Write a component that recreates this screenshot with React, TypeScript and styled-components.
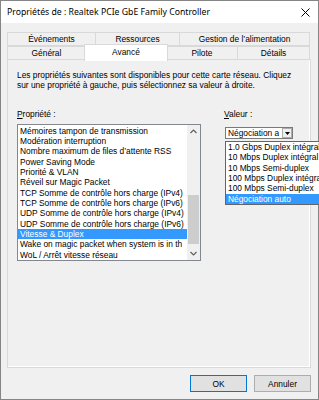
import styled, { createGlobalStyle } from 'styled-components'

const GlobalStyle = createGlobalStyle`
  html, body {
    margin: 0;
    padding: 0;
    overflow: hidden;
    background: #f0f0f0;
  }
  body {
    font-family: "Liberation Sans", Arial, sans-serif;
    color: #000;
  }
`

const Window = styled.div`
  width: 319px;
  height: 400px;
  box-sizing: border-box;
  border: 1px solid #858585;
  background: #f0f0f0;
  display: flex;
  flex-direction: column;
`

const TitleBar = styled.div`
  height: 22px;
  background: #fff;
  display: flex;
  align-items: center;
  justify-content: space-between;
  padding: 0 8px 0 6px;
  flex-shrink: 0;
`

const TitleText = styled.span`
  font-family: "Noto Sans", "Open Sans", sans-serif;
  font-size: 8.7px;
  color: #000;
  white-space: nowrap;
`

const Body = styled.div`
  padding: 9px 7px 0 6px;
  display: flex;
  flex-direction: column;
`

const TabRow = styled.div`
  display: flex;
  height: 14px;
  align-items: flex-end;
`

// selected tab is 2px taller and overlaps its neighbours a little
const Tab = styled.div<{ $w: number; $active?: boolean }>`
  box-sizing: border-box;
  width: ${(p) => p.$w}px;
  height: ${(p) => (p.$active ? 17 : 14)}px;
  margin-left: ${(p) => (p.$active ? -2 : -1)}px;
  margin-right: ${(p) => (p.$active ? -1 : 0)}px;
  margin-bottom: ${(p) => (p.$active ? -1 : 0)}px;
  border: 1px solid #d9d9d9;
  border-bottom: ${(p) => (p.$active ? 'none' : '1px solid #d9d9d9')};
  background: ${(p) => (p.$active ? '#fff' : '#f0f0f0')};
  position: ${(p) => (p.$active ? 'relative' : 'static')};
  z-index: ${(p) => (p.$active ? 2 : 0)};
  display: flex;
  align-items: center;
  justify-content: center;
  font-size: 8.4px;
  padding-bottom: ${(p) => (p.$active ? 2 : 0)}px;
  white-space: nowrap;

  &:first-child {
    margin-left: 0;
  }
`

const Panel = styled.div`
  box-sizing: border-box;
  height: 309px;
  margin-top: -1px;
  border: 1px solid #d9d9d9;
  box-shadow: inset -1px -1px 0 #fff;
  background: #f0f0f0;
  padding: 10px 8px 0 9px;
  position: relative;
  z-index: 1;
`

const Description = styled.p`
  margin: 0;
  font-size: 8.4px;
  line-height: 10px;
  white-space: nowrap;
`

const Columns = styled.div`
  display: grid;
  grid-template-columns: 184px 1fr;
  column-gap: 23px;
  margin-top: 19px;
`

const Column = styled.div`
  display: flex;
  flex-direction: column;
`

const Label = styled.div`
  font-size: 8.4px;
  line-height: 10px;
  height: 10px;
`

const ListBox = styled.div`
  box-sizing: border-box;
  margin-top: 5px;
  height: 137px;
  border: 1px solid #828790;
  background: #fff;
  display: flex;
`

const Items = styled.div`
  flex: 1;
  overflow: hidden;
  padding-top: 0.5px;
`

const Item = styled.div<{ $selected?: boolean }>`
  height: 10.35px;
  line-height: 10.35px;
  font-size: 8.4px;
  padding-left: 2px;
  white-space: nowrap;
  overflow: hidden;
  background: ${(p) => (p.$selected ? '#3399ff' : 'transparent')};
  color: ${(p) => (p.$selected ? '#fff' : '#000')};
`

const ScrollBar = styled.div`
  width: 13px;
  background: #f0f0f0;
  display: flex;
  flex-direction: column;
`

const ScrollArrow = styled.div`
  height: 13px;
  display: flex;
  align-items: center;
  justify-content: center;
  flex-shrink: 0;
`

const Track = styled.div`
  flex: 1;
  display: flex;
  flex-direction: column;
`

const Thumb = styled.div`
  margin: 57px 1px 0 1px;
  height: 49px;
  background: #cdcdcd;
`

const ComboWrap = styled.div`
  position: relative;
  margin-top: 8px;
  margin-left: 1px;
  width: 68px;
`

const Combo = styled.div`
  box-sizing: border-box;
  height: 12px;
  border: 1px solid #7a7a7a;
  background: #fff;
  display: flex;
`

const ComboText = styled.div`
  flex: 1;
  overflow: hidden;
  white-space: nowrap;
  font-size: 8.4px;
  line-height: 10px;
  padding-left: 2px;
  margin-right: 3px;
`

const ComboButton = styled.div`
  box-sizing: border-box;
  width: 10px;
  border: 1px solid #adadad;
  background: #f0f0f0;
  display: flex;
  align-items: center;
  justify-content: center;
`

const DropList = styled.div`
  position: absolute;
  top: calc(100% + 2px);
  left: 0;
  width: 110px;
  box-sizing: border-box;
  border: 1px solid #646464;
  background: #fff;
  z-index: 5;
`

const Footer = styled.div`
  display: flex;
  justify-content: flex-end;
  gap: 7px;
  padding-top: 7px;
`

const Button = styled.div<{ $default?: boolean }>`
  box-sizing: border-box;
  width: 57px;
  height: 17px;
  background: #e1e1e1;
  border: 1px solid ${(p) => (p.$default ? '#0078d7' : '#adadad')};
  display: flex;
  align-items: center;
  justify-content: center;
  font-size: 8.4px;
`

const properties = [
  'Mémoires tampon de transmission',
  'Modération interruption',
  'Nombre maximum de files d’attente RSS',
  'Power Saving Mode',
  'Priorité & VLAN',
  'Réveil sur Magic Packet',
  'TCP Somme de contrôle hors charge (IPv4)',
  'TCP Somme de contrôle hors charge (IPv6)',
  'UDP Somme de contrôle hors charge (IPv4)',
  'UDP Somme de contrôle hors charge (IPv6)',
  'Vitesse & Duplex',
  'Wake on magic packet when system is in th',
  'WoL / Arrêt vitesse réseau',
]

const values = [
  '1.0 Gbps Duplex intégral',
  '10 Mbps Duplex intégral',
  '10 Mbps Semi-duplex',
  '100 Mbps Duplex intégral',
  '100 Mbps Semi-duplex',
  'Négociation auto',
]

const Chevron = ({ up }: { up?: boolean }) => (
  <svg width="7" height="5" viewBox="0 0 7 5">
    <polyline
      points={up ? '0.5,4 3.5,1 6.5,4' : '0.5,1 3.5,4 6.5,1'}
      fill="none"
      stroke="#606060"
      strokeWidth="1.2"
    />
  </svg>
)

export default function App() {
  return (
    <>
      <GlobalStyle />
      <Window>
        <TitleBar>
          <TitleText>Propriétés de : Realtek PCIe GbE Family Controller</TitleText>
          <svg width="9" height="9" viewBox="0 0 9 9">
            <path d="M0.5 0.5 L8.5 8.5 M8.5 0.5 L0.5 8.5" stroke="#000" strokeWidth="1" />
          </svg>
        </TitleBar>
        <Body>
          <TabRow>
            <Tab $w={89}>Événements</Tab>
            <Tab $w={85}>Ressources</Tab>
            <Tab $w={131}>Gestion de l’alimentation</Tab>
          </TabRow>
          <TabRow>
            <Tab $w={79}>Général</Tab>
            <Tab $w={84} $active>
              Avancé
            </Tab>
            <Tab $w={72}>Pilote</Tab>
            <Tab $w={73}>Détails</Tab>
          </TabRow>
          <Panel>
            <Description>
              Les propriétés suivantes sont disponibles pour cette carte réseau. Cliquez
              <br />
              sur une propriété à gauche, puis sélectionnez sa valeur à droite.
            </Description>
            <Columns>
              <Column>
                <Label>
                  <u>P</u>ropriété :
                </Label>
                <ListBox>
                  <Items>
                    {properties.map((p) => (
                      <Item key={p} $selected={p === 'Vitesse & Duplex'}>
                        {p}
                      </Item>
                    ))}
                  </Items>
                  <ScrollBar>
                    <ScrollArrow>
                      <Chevron up />
                    </ScrollArrow>
                    <Track>
                      <Thumb />
                    </Track>
                    <ScrollArrow>
                      <Chevron />
                    </ScrollArrow>
                  </ScrollBar>
                </ListBox>
              </Column>
              <Column>
                <Label>
                  <u>V</u>aleur :
                </Label>
                <ComboWrap>
                  <Combo>
                    <ComboText>Négociation auto</ComboText>
                    <ComboButton>
                      <svg width="5" height="3" viewBox="0 0 5 3">
                        <polygon points="0,0 5,0 2.5,3" fill="#000" />
                      </svg>
                    </ComboButton>
                  </Combo>
                  <DropList>
                    {values.map((v) => (
                      <Item key={v} $selected={v === 'Négociation auto'}>
                        {v}
                      </Item>
                    ))}
                  </DropList>
                </ComboWrap>
              </Column>
            </Columns>
          </Panel>
          <Footer>
            <Button $default>OK</Button>
            <Button>Annuler</Button>
          </Footer>
        </Body>
      </Window>
    </>
  )
}
